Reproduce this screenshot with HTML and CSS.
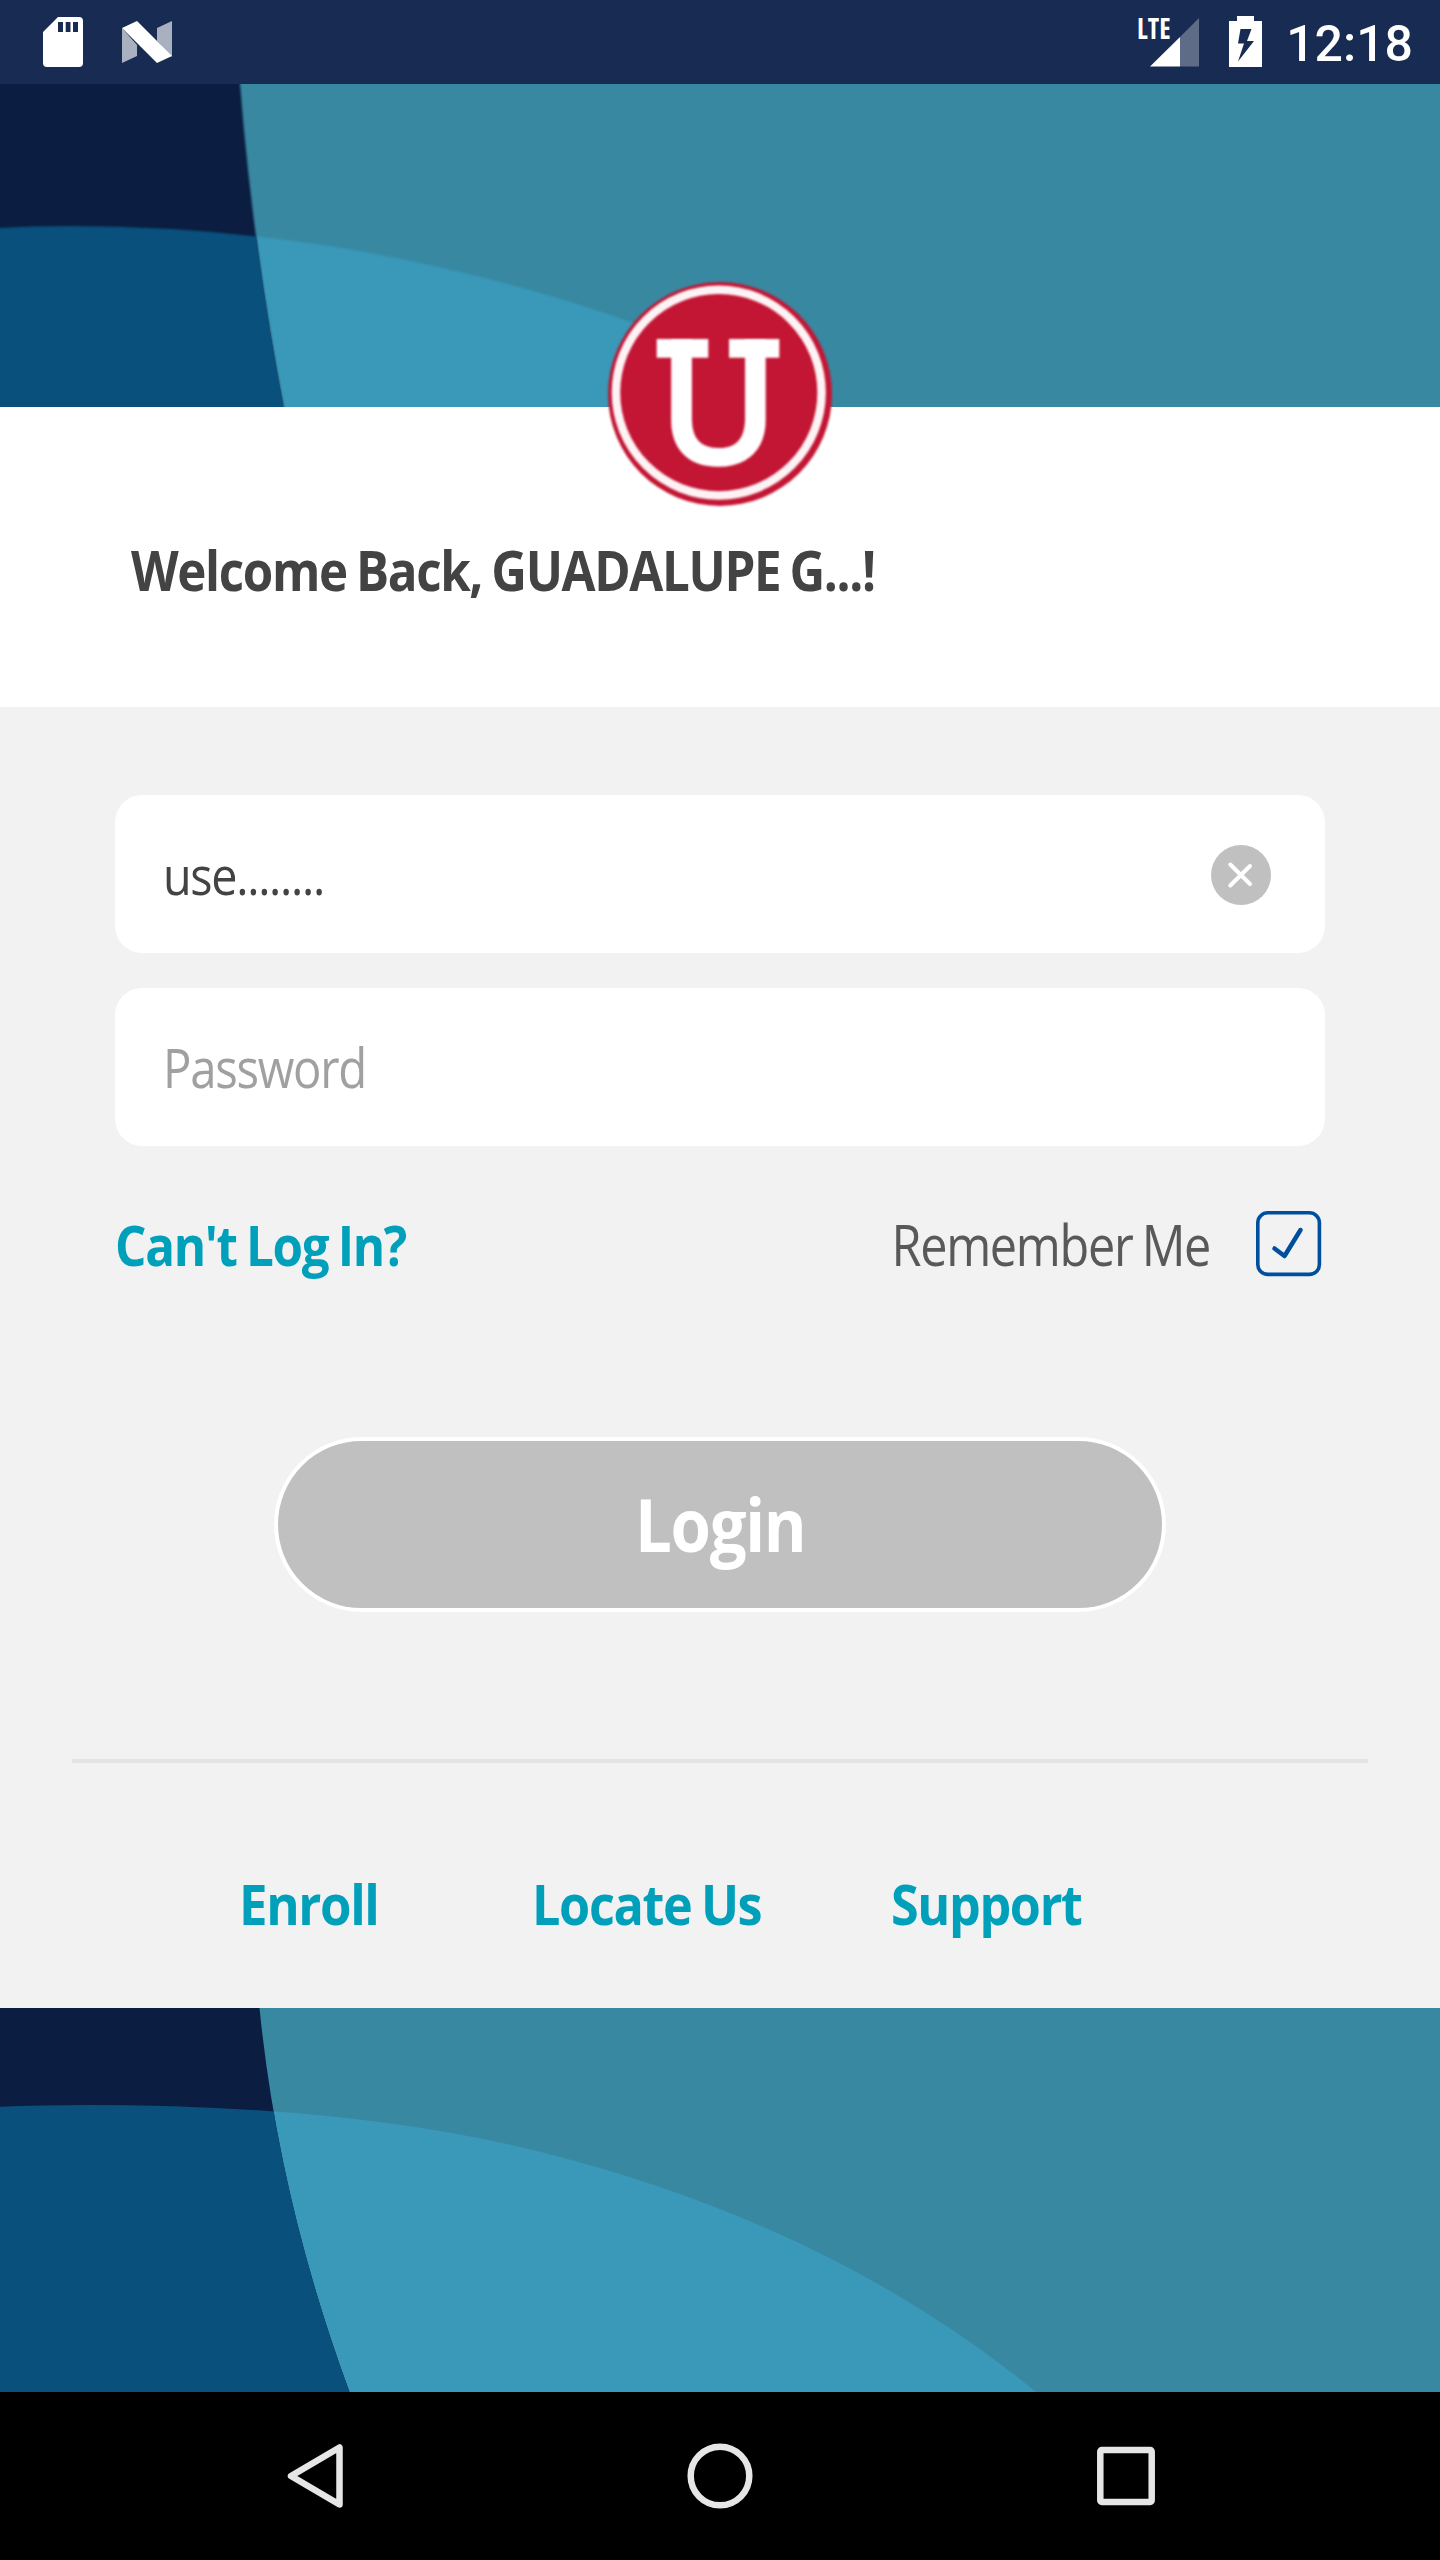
FILE: index.html
```html
<!DOCTYPE html>
<html lang="en">
<head>
<meta charset="utf-8">
<title>Login</title>
<link rel="stylesheet" href="styles.css">
</head>
<body>
<div class="screen">
  <div class="status">
    <div class="status-group">
      <svg width="40" height="50" viewBox="0 0 40 50"><path fill="#fff" fill-rule="evenodd" d="M15 0H36Q40 0 40 4V46Q40 50 36 50H4Q0 50 0 46V15ZM15 5V15H20V5ZM22.7 5V15H27.500V5ZM30 5V15H35V5Z"/></svg>
      <svg width="50" height="42" viewBox="0 0 50 42"><path fill="#a9b0c0" d="M0 7 15 24V35L0 42ZM35 7 50 0V36L35 20Z"/><path fill="#fff" d="M0 7 15 0 50 35 35 42Z"/></svg>
    </div>
    <div class="status-group status-right">
      <svg class="signal" width="62" height="50" viewBox="0 0 62 50">
        <path fill="#5f6c87" d="M42 20 61 1V49.500H42Z"/><path fill="#fff" d="M12 49.500 42 20V49.500Z"/>
        <text class="lte" x="-1" y="22" textLength="33.500" lengthAdjust="spacingAndGlyphs">LTE</text>
      </svg>
      <svg class="battery" width="33" height="51" viewBox="0 0 33 51"><path fill="#fff" fill-rule="evenodd" d="M8 0H25V5H33V51H0V5H8ZM11.500 13 9 27.500H15L9 45.500 25 25H18L22.500 13Z"/></svg>
      <span class="clock">12:18</span>
    </div>
  </div>

  <header class="hero">
    <svg class="art soft" width="1440" height="323" viewBox="0 0 1440 323">
      <rect x="-5" y="-5" width="1450" height="333" fill="#3888a1"/>
      <path fill="#3a98b8" d="M-5 144A1692 1692 0 0 1 70 142A1692 1692 0 0 1 831 323V330H-5Z"/>
      <path fill="#0b1d40" d="M-5-5H239.700L240 0Q252.600 161.500 283.500 323L284.500 330H-5Z"/>
      <clipPath id="left1"><path d="M-5-5H239.700L240 0Q252.600 161.500 283.500 323L284.500 330H-5Z"/></clipPath>
      <path clip-path="url(#left1)" fill="#09507c" d="M-5 144A1692 1692 0 0 1 70 142A1692 1692 0 0 1 831 323V330H-5Z"/>
    </svg>
    <svg class="logo" width="224" height="224" viewBox="0 0 224 224">
      <circle cx="112" cy="112" r="112" fill="#c31634"/>
      <circle cx="110.800" cy="110.600" r="102.800" fill="none" stroke="#fdf3f5" stroke-width="8.500"/>
      <text class="logo-letter" x="49.500" y="181.700" textLength="122" lengthAdjust="spacingAndGlyphs">U</text>
      <path fill="#fff" d="M48.700 57H100.300V75.700H48.700ZM121 57H171.300V75.700H121Z"/>
    </svg>
  </header>

  <section class="welcome"><h1>Welcome Back, GUADALUPE G...!</h1></section>

  <main class="form">
    <div class="field">
      <span class="username">use........</span>
      <svg class="clear" width="60" height="60" viewBox="0 0 60 60"><circle cx="30" cy="30" r="30" fill="#c0c0c0"/><path d="M19.300 19.500 39 39M39 21 19.300 40.500" stroke="#fff" stroke-width="4" stroke-linecap="round"/></svg>
    </div>
    <div class="field"><span class="placeholder">Password</span></div>
    <div class="options">
      <a class="link cant">Can't Log In?</a>
      <div class="remember"><span>Remember Me</span>
        <svg width="66" height="66" viewBox="0 0 66 66" fill="none" stroke="#004f9f"><rect x="1.800" y="1.800" width="61.600" height="61.600" rx="10" stroke-width="3.600"/><path d="M18.500 37.500 28.500 45 44.500 19" stroke-width="4.500" stroke-linecap="round" stroke-linejoin="round"/></svg>
      </div>
    </div>
    <div class="login"><span>Login</span></div>
    <hr class="rule">
    <nav class="links"><a class="link enroll">Enroll</a><a class="link locate">Locate Us</a><a class="link support">Support</a></nav>
  </main>

  <svg class="art" width="1440" height="384" viewBox="0 0 1440 384">
    <rect width="1440" height="384" fill="#3888a1"/>
    <path fill="#3a98b8" d="M0 98.700Q40 97 88 97Q353 97 540 143.700Q832 216.700 1036 384H0Z"/>
    <clipPath id="left2"><path d="M0 0H259.500Q278.600 192 349.500 384H0Z"/></clipPath>
    <path fill="#0b1d40" d="M0 0H259.500Q278.600 192 349.500 384H0Z"/>
    <path clip-path="url(#left2)" fill="#09507c" d="M0 98.700Q40 97 88 97Q353 97 540 143.700Q832 216.700 1036 384H0Z"/>
  </svg>

  <footer class="navbar">
    <svg width="56" height="66" viewBox="0 0 56 66"><path d="M52.500 4.500V61.500L4 33Z" /></svg>
    <svg width="66" height="66" viewBox="0 0 66 66"><circle cx="33" cy="33" r="29.300"/></svg>
    <svg width="58" height="60" viewBox="0 0 58 60"><rect x="3.300" y="4.100" width="51.400" height="51.800" rx="1.500"/></svg>
  </footer>
</div>
</body>
</html>
```
FILE: styles.css
```css
* { box-sizing: border-box; }
body { margin: 0; font-family: "Open Sans", "Noto Sans", sans-serif; }
svg { display: block; flex: none; }
span, a, h1 { white-space: nowrap; }
.screen { width: 1440px; height: 2560px; display: flex; flex-direction: column; overflow: hidden; background: #f2f2f2; }

.status { height: 84px; flex: none; background: #182b52; display: flex; justify-content: space-between; padding: 0 27px 0 43px; color: #fff; }
.status-group { display: flex; align-items: center; gap: 39px; }
.status-right { gap: 0; }
.signal { overflow: visible; margin-right: 29px; }
.battery { margin-right: 24px; margin-top: -1px; }
.lte { font: 700 29px "Open Sans", sans-serif; font-stretch: 75%; fill: #fff; }
.clock { font: 500 50px/84px Roboto, sans-serif; padding-top: 4px; }

.hero { height: 323px; flex: none; position: relative; }
.soft { overflow: hidden; }
.soft path { filter: blur(1.2px); }
.logo { position: absolute; left: 608px; top: 198px; z-index: 1; overflow: visible; }
.logo circle, .logo path, .logo text { filter: blur(0.9px); }
.logo-letter { font: 600 173px "Open Sans", sans-serif; fill: #fff; stroke: #fff; stroke-width: 1.5px; }

/* The type is narrowed horizontally and tracked tight throughout the form. */
.welcome h1, .username, .placeholder, .remember span, .login span, .link { letter-spacing: -1.5px; word-spacing: -2.5px; transform-origin: left center; }

.welcome { height: 300px; flex: none; background: #fff; padding: 130px 0 0 131px; }
.welcome h1 { margin: 0; font-size: 55px; line-height: 66px; font-weight: 700; color: #434343; transform: scaleX(0.896); }

.form { height: 1301px; flex: none; padding: 88px 72px 0; }
.field { margin: 0 43px 35px; height: 158px; border-radius: 27px; background: #fff; display: flex; align-items: center; justify-content: space-between; padding: 0 54px 0 48px; font-size: 55px; }
.username { color: #434343; font-size: 53px; transform: scaleX(0.882); }
.clear { margin-top: 2px; }
.placeholder { color: #a0a0a0; padding-bottom: 2px; transform: scaleX(0.86); }
.options { margin: 65px 46px 0 43px; height: 66px; display: flex; justify-content: space-between; align-items: center; font-size: 56px; }
.remember { display: flex; align-items: center; gap: 46px; color: #595959; }
.remember span { transform: scaleX(0.868); transform-origin: right center; }
.link { color: #00a0ba; font-weight: 700; }
.cant { transform: scaleX(0.8815); }
.login { width: 892px; height: 175px; margin: 160px auto 0; border: 4px solid #fff; border-radius: 88px; background: #c0c0c0; color: #fff; font-size: 73px; font-weight: 700; display: flex; align-items: center; justify-content: center; }
.login span { transform: scaleX(0.895); transform-origin: center; padding-bottom: 2px; }
.rule { height: 4px; margin: 147px 0 0; border: 0; background: #e3e3e3; }
.links { display: flex; font-size: 56px; line-height: 80px; margin-top: 100px; padding-left: 167px; }
.enroll { width: 293px; transform: scaleX(0.909); }
.locate { width: 359px; transform: scaleX(0.899); }
.support { transform: scaleX(0.897); }

.navbar { height: 168px; flex: none; background: #000; display: flex; align-items: center; justify-content: space-between; padding: 0 285px 0 287px; }
.navbar svg { fill: none; stroke: #e6e6e6; stroke-width: 6.500; stroke-linejoin: round; }
```
